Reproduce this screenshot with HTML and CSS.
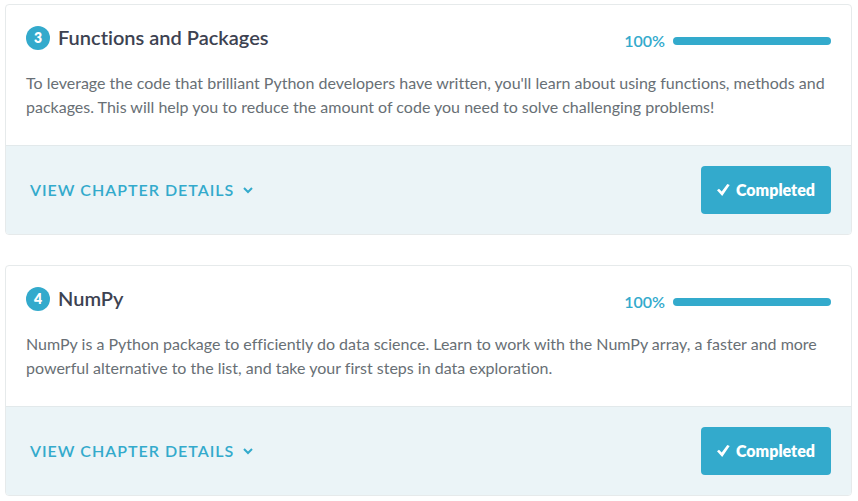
FILE: index.html
```html
<!DOCTYPE html>
<html lang="en">
<head>
<meta charset="utf-8">
<title>Course chapters</title>
<link rel="stylesheet" href="styles.css">
</head>
<body>
<main class="chapters">
  <section class="chapter">
    <div class="chapter-body">
      <header class="chapter-head">
        <span class="chapter-number">3</span>
        <h2 class="chapter-title">Functions and Packages</h2>
        <div class="progress"><span class="progress-value">100%</span><span class="progress-track"><span class="progress-fill"></span></span></div>
      </header>
      <p class="chapter-text">To leverage the code that brilliant Python developers have written, you'll learn about using functions, methods and packages. This will help you to reduce the amount of code you need to solve challenging problems!</p>
    </div>
    <footer class="chapter-foot">
      <a class="details" href="#">View chapter details <svg class="chevron" viewBox="0 0 10 7" aria-hidden="true"><path d="M1 1l4 4 4-4"/></svg></a>
      <button class="completed" type="button"><svg class="check" viewBox="0 0 13 12" aria-hidden="true"><path d="M0 6.300L2 4.800 4.700 7.500 10.300 0 12.700 1 5.200 12Z"/></svg>Completed</button>
    </footer>
  </section>
  <section class="chapter">
    <div class="chapter-body">
      <header class="chapter-head">
        <span class="chapter-number">4</span>
        <h2 class="chapter-title">NumPy</h2>
        <div class="progress"><span class="progress-value">100%</span><span class="progress-track"><span class="progress-fill"></span></span></div>
      </header>
      <p class="chapter-text">NumPy is a Python package to efficiently do data science. Learn to work with the NumPy array, a faster and more powerful alternative to the list, and take your first steps in data exploration.</p>
    </div>
    <footer class="chapter-foot">
      <a class="details" href="#">View chapter details <svg class="chevron" viewBox="0 0 10 7" aria-hidden="true"><path d="M1 1l4 4 4-4"/></svg></a>
      <button class="completed" type="button"><svg class="check" viewBox="0 0 13 12" aria-hidden="true"><path d="M0 6.300L2 4.800 4.700 7.500 10.300 0 12.700 1 5.200 12Z"/></svg>Completed</button>
    </footer>
  </section>
</main>
</body>
</html>
```
FILE: styles.css
```css
* { box-sizing: border-box; }
body {
  margin: 0;
  background: #fff;
  color: #686f75;
  font: 16px/24px Lato, sans-serif;
  font-variant-ligatures: none;
}
.chapters {
  display: grid;
  gap: 30px;
  padding: 4px 6px 4px 5px;
}
.chapter {
  border: 1px solid #e6eaeb;
  border-radius: 4px;
  overflow: hidden;
}
.chapter-body { padding: 21px 20px 26px; }
.chapter-head {
  display: flex;
  align-items: flex-start;
  margin-bottom: 18px;
}
.chapter-number {
  width: 24px;
  height: 24px;
  margin-right: 8px;
  border-radius: 50%;
  background: #3ac;
  color: #fff;
  font-size: 14px;
  font-weight: 800;
  text-align: center;
}
.chapter-title {
  margin: 0;
  color: #3d4251;
  font-size: 20px;
  line-height: 22px;
  font-weight: 600;
}
.progress {
  display: flex;
  align-items: center;
  gap: 8px;
  margin-left: auto;
  padding-top: 3px;
}
.progress-value {
  color: #3ac;
  font-weight: 600;
}
.progress-track {
  width: 158px;
  height: 8px;
  border-radius: 4px;
  background: #ebf4f7;
}
.progress-fill {
  display: block;
  height: 100%;
  border-radius: 4px;
  background: #3ac;
}
.chapter-text { margin: 0; }
.chapter-foot {
  display: flex;
  align-items: center;
  justify-content: space-between;
  padding: 20px 20px 20px 24px;
  border-top: 1px solid #e2e9eb;
  background: #ebf4f7;
}
.details {
  display: flex;
  align-items: center;
  gap: 9px;
  color: #3ac;
  font-weight: 600;
  letter-spacing: 1px;
  text-decoration: none;
  text-transform: uppercase;
}
.chevron {
  width: 10px;
  height: 7px;
  fill: none;
  stroke: currentColor;
  stroke-width: 2;
}
.completed {
  display: flex;
  align-items: center;
  gap: 6px;
  height: 48px;
  padding: 0 16px;
  border: 0;
  border-radius: 4px;
  background: #3ac;
  color: #fff;
  font: 800 16px/24px Lato, sans-serif;
}
.check {
  width: 13px;
  height: 12px;
  fill: currentColor;
}
```
